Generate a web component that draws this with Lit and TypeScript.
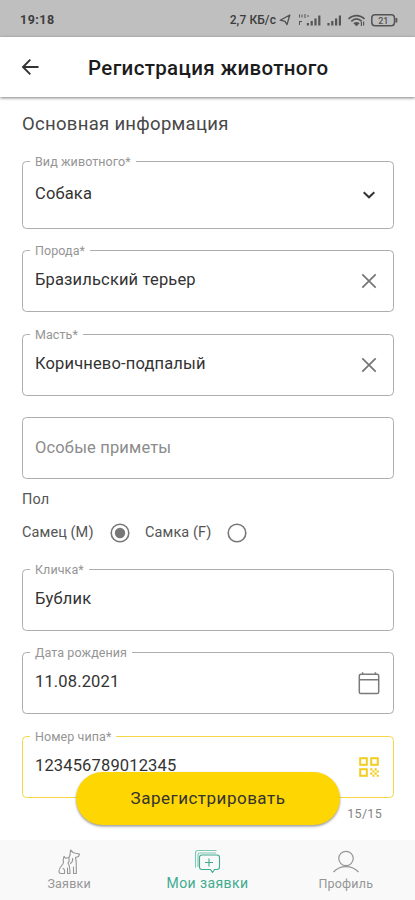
import { LitElement, html, css, svg, nothing, TemplateResult } from "lit";
import { customElement, property } from "lit/decorators.js";

const icons = {
  chevron: html`<svg width="24" height="24" viewBox="0 0 24 24" fill="none" stroke="#333" stroke-width="2"><path d="M6.7 9.300 12 14.300 17.300 9.300" /></svg>`,
  close: html`<svg width="24" height="24" viewBox="0 0 24 24" fill="none" stroke="#757575" stroke-width="1.700"><path d="M5.300 5.300 18.700 18.700M18.700 5.300 5.300 18.700" /></svg>`,
  calendar: html`<svg width="24" height="26" viewBox="0 0 24 26" fill="none" stroke="#7a7a7a" stroke-width="1.500"><rect x="2.300" y="4.200" width="19.400" height="19.300" rx="1.600" /><path d="M2.300 9.800H21.700M5.600 2.200V4.400M18.400 2.200V4.400" /></svg>`,
  qr: html`<svg width="24" height="24" viewBox="0 0 24 24" fill="none" stroke="#f3cd22" stroke-width="2"><rect x="3.200" y="3.200" width="6.600" height="6.600" /><rect x="14.200" y="3.200" width="6.600" height="6.600" /><rect x="3.200" y="14.200" width="6.600" height="6.600" /><g fill="#f3cd22" stroke="none"><path d="M13.200 13.200h2.200v2.200h-2.200zM17.500 13.200h2.200v2.200h-2.200zM15.400 15.400h2.100v2.100h-2.100zM19.700 15.400h2.100v2.100h-2.100zM13.200 17.500h2.200v2.200h-2.200zM17.500 17.500h2.200v2.200h-2.200zM15.400 19.700h2.100v2.100h-2.100zM19.700 19.700h2.100v2.100h-2.100z" /></g></svg>`,
};

@customElement("outlined-field")
class OutlinedField extends LitElement {
  @property() label = "";
  @property() value = "";
  @property() placeholder = "";
  @property() icon = "";
  @property({ type: Boolean, reflect: true }) active = false;

  static styles = css`
    :host {
      display: block;
      position: relative;
      box-sizing: border-box;
      height: 62px;
      border: 1px solid #adadad;
      border-radius: 4.5px;
    }
    :host([active]) {
      border-color: #f5d648;
    }
    .row {
      display: flex;
      align-items: center;
      justify-content: space-between;
      height: 100%;
      box-sizing: border-box;
      padding: 0 12px;
    }
    .value {
      font-size: 16.5px;
      line-height: 20px;
      letter-spacing: 0.15px;
      color: #333;
      margin-top: -2px;
      white-space: nowrap;
    }
    .value.empty {
      color: #8c8c8c;
      margin-top: -1px;
    }
    .icon {
      display: flex;
    }
    .label {
      position: absolute;
      left: 7px;
      top: -8px;
      padding: 0 5px;
      background: #fff;
      font-size: 12.5px;
      line-height: 15px;
      letter-spacing: 0.08px;
      color: #959595;
      white-space: nowrap;
    }
  `;

  render() {
    return html`
      ${this.label ? html`<span class="label">${this.label}</span>` : nothing}
      <div class="row">
        ${this.value
          ? html`<span class="value">${this.value}</span>`
          : html`<span class="value empty">${this.placeholder}</span>`}
        <span class="icon">${this.icon ? (icons as Record<string, TemplateResult>)[this.icon] : nothing}</span>
      </div>
    `;
  }
}

const bars = (x: number) =>
  svg`<path d="M${x} 13.500v-2.500h2.200v2.500zM${x + 3.8} 13.500V9h2.200v4.500zM${x + 7.6} 13.500V6.500h2.200v7zM${x + 11.4} 13.500V3.500h2.200v10z" />`;

@customElement("app-root")
class AppRoot extends LitElement {
  static styles = css`
    :host {
      display: flex;
      flex-direction: column;
      position: relative;
      width: 415px;
      height: 900px;
      overflow: hidden;
      background: #fff;
      font-family: Roboto, sans-serif;
      color: #444;
    }
    svg {
      display: block;
    }
    .status {
      flex: none;
      height: 37px;
      background: #bfbfbf;
      display: flex;
      align-items: center;
      justify-content: space-between;
      box-sizing: border-box;
      padding: 2px 17px 0 20px;
      font-weight: 500;
      color: #3d3d3d;
    }
    .time {
      font-size: 12.5px;
      letter-spacing: 0.5px;
      font-weight: 700;
    }
    .indicators {
      display: flex;
      align-items: center;
    }
    .speed {
      font-size: 12px;
      letter-spacing: 0.1px;
      margin-right: 3px;
    }
    .header {
      flex: none;
      height: 60px;
      display: flex;
      align-items: center;
      padding-left: 20px;
      background: #fff;
      box-shadow: 0 1px 3px rgba(0, 0, 0, 0.5);
    }
    .title {
      margin: 2px 0 0 46px;
      font-size: 20.5px;
      line-height: 26px;
      font-weight: 500;
      letter-spacing: 0.35px;
      color: #1c1c1c;
      white-space: nowrap;
    }
    .form {
      flex: 1;
      min-height: 0;
      padding: 15px 21px 0 22px;
      display: flex;
      flex-direction: column;
    }
    .section {
      font-size: 18.5px;
      line-height: 24px;
      letter-spacing: 0.3px;
      color: #484848;
    }
    .group {
      display: flex;
      flex-direction: column;
      gap: 21.5px;
    }
    .group.first {
      margin-top: 25px;
    }
    .tall {
      height: 67.5px;
    }
    .sex {
      margin-top: 12px;
      font-size: 14.5px;
      line-height: 17px;
      color: #555;
      letter-spacing: 0.1px;
    }
    .radios {
      display: flex;
      align-items: center;
      height: 24px;
      margin: 12.5px 0 24px;
      font-size: 14.5px;
      letter-spacing: 0.1px;
      color: #555;
    }
    .radios svg {
      margin: 0 15.5px 0 16px;
    }
    .counter {
      align-self: flex-end;
      margin: 7px 12px 0 0;
      font-size: 12.5px;
      line-height: 17px;
      letter-spacing: 0.3px;
      color: #858585;
    }
    .submit {
      position: absolute;
      left: 76px;
      top: 772px;
      width: 264px;
      height: 53px;
      padding: 0 0 2px;
      border: 0;
      border-radius: 27px;
      background: #fed602;
      box-shadow: 0 1.5px 2.5px rgba(0, 0, 0, 0.4);
      font: 17px/20px Roboto, sans-serif;
      letter-spacing: 0.5px;
      color: #333;
    }
    .nav {
      flex: none;
      height: 60px;
      display: grid;
      grid-template-columns: repeat(3, 1fr);
      background: #f9f9f9;
      color: #969696;
    }
    .tab {
      display: flex;
      flex-direction: column;
      align-items: center;
      padding-top: 8px;
      font-size: 12.5px;
      line-height: 16px;
      letter-spacing: 0.2px;
    }
    .tab svg {
      margin-bottom: 1px;
    }
    .tab.on {
      color: #3fab90;
      font-size: 14px;
      line-height: 14px;
      letter-spacing: 0.4px;
    }
  `;

  private radio(checked: boolean) {
    return html`<svg width="20" height="20" viewBox="0 0 20 20">
      <circle cx="10" cy="10" r="8.800" fill="none" stroke="#777" stroke-width="1.600" />
      ${checked ? svg`<circle cx="10" cy="10" r="5.200" fill="#777" />` : nothing}
    </svg>`;
  }

  render() {
    return html`
      <div class="status">
        <span class="time">19:18</span>
        <div class="indicators">
          <span class="speed">2,7 КБ/с</span>
          <svg width="119" height="16" viewBox="0 0 119 16" fill="#555">
            <path d="M1.200 8.200 10.800 3 8 12.600 6 9.300z" fill="none" stroke="#505050" stroke-width="1.300" stroke-linejoin="round" />
            <path d="M20 2.500h1v3h-1zM22.500 2.500h1v3h-1zM25 2.500h2v1h-2zM25 4.500h2v1h-2zM28 3.500h2v1h-2zM20 9h3v1h-2v3h-1z" />
            ${bars(27.8)} ${bars(48.4)}
            <g fill="none" stroke="#555" stroke-width="1.700">
              <path d="M69.500 7C74 2.400 81 2.400 85.500 7M72.300 9.300C75.500 6.300 79.500 6.300 82.700 9.300" />
            </g>
            <path d="M74.300 11.200Q77.500 8.800 80.700 11.200L77.500 14.200zM81.800 10h1.200v4h-1.200zM84 9.500h1.200v4h-1.200z" />
            <rect x="92.800" y="2.700" width="22.700" height="11" rx="3.200" fill="none" stroke="#555" stroke-width="1.500" />
            <path d="M116.500 6h1.800v4.500h-1.800z" />
            <text x="104.300" y="11.500" font-size="9" text-anchor="middle">21</text>
          </svg>
        </div>
      </div>
      <div class="header">
        <svg width="22" height="22" viewBox="0 0 22 22" fill="none" stroke="#333" stroke-width="1.900"><path d="M18.500 11H3M10.300 3.700 3 11l7.300 7.300" /></svg>
        <span class="title">Регистрация животного</span>
      </div>
      <div class="form">
        <div class="section">Основная информация</div>
        <div class="group first">
          <outlined-field class="tall" label="Вид животного*" value="Собака" icon="chevron"></outlined-field>
          <outlined-field label="Порода*" value="Бразильский терьер" icon="close"></outlined-field>
          <outlined-field label="Масть*" value="Коричнево-подпалый" icon="close"></outlined-field>
          <outlined-field placeholder="Особые приметы"></outlined-field>
        </div>
        <div class="sex">Пол</div>
        <div class="radios">
          <span>Самец (M)</span>${this.radio(true)}<span>Самка (F)</span>${this.radio(false)}
        </div>
        <div class="group">
          <outlined-field label="Кличка*" value="Бублик"></outlined-field>
          <outlined-field label="Дата рождения" value="11.08.2021" icon="calendar"></outlined-field>
          <outlined-field active label="Номер чипа*" value="123456789012345" icon="qr"></outlined-field>
        </div>
        <span class="counter">15/15</span>
      </div>
      <button class="submit">Зарегистрировать</button>
      <div class="nav">
        <div class="tab">
          <svg width="26" height="27" viewBox="0 0 26 27" fill="none" stroke="currentColor" stroke-width="1.100" stroke-linejoin="round" stroke-linecap="round">
            <path d="M13 9.500C14.300 7.500 14.500 5 14.500 2L17 4.500 19.500 5.200 23.500 6 22.500 8.500 19.500 9.500C20.500 13 20.300 16 20.300 19V25.500H17.500V19" />
            <path d="M7.500 14.500C6.800 12.500 7.300 10.500 8 8.500L10 10.300 12.500 9.500C13.500 11.500 13.500 13.500 12 15C14 18 14 21 14 25.500H11.500V20M7.500 14.500C7 17 3 19 3 23Q3 25.500 5 25.500H8.500C9 22.500 8.500 21 7 20.500M14.500 15.500C16.500 14 17 12 16.500 10.500" />
          </svg>
          <span>Заявки</span>
        </div>
        <div class="tab on">
          <svg width="28" height="27" viewBox="0 0 28 27" fill="none" stroke="currentColor" stroke-width="1.100" stroke-linejoin="round">
            <path d="M2.500 19.500V5Q2.500 2.500 5 2.500H23.500M5 19V7Q5 5 7 5H23" opacity=".65" />
            <path d="M9 7H24Q26.500 7 26.500 9.500V19Q26.500 21.500 24 21.500H21.500L19.500 24.500 17.500 21.500H9Q6.500 21.500 6.500 19V9.500Q6.500 7 9 7zM16 10.500V18.500M12 14.500H20" />
          </svg>
          <span>Мои заявки</span>
        </div>
        <div class="tab">
          <svg width="28" height="27" viewBox="0 0 28 27" fill="none" stroke="currentColor" stroke-width="1.200"><circle cx="14" cy="10.500" r="7.200" /><path d="M1.500 24C8 16.800 20 16.800 26.500 24" /></svg>
          <span>Профиль</span>
        </div>
      </div>
    `;
  }
}
